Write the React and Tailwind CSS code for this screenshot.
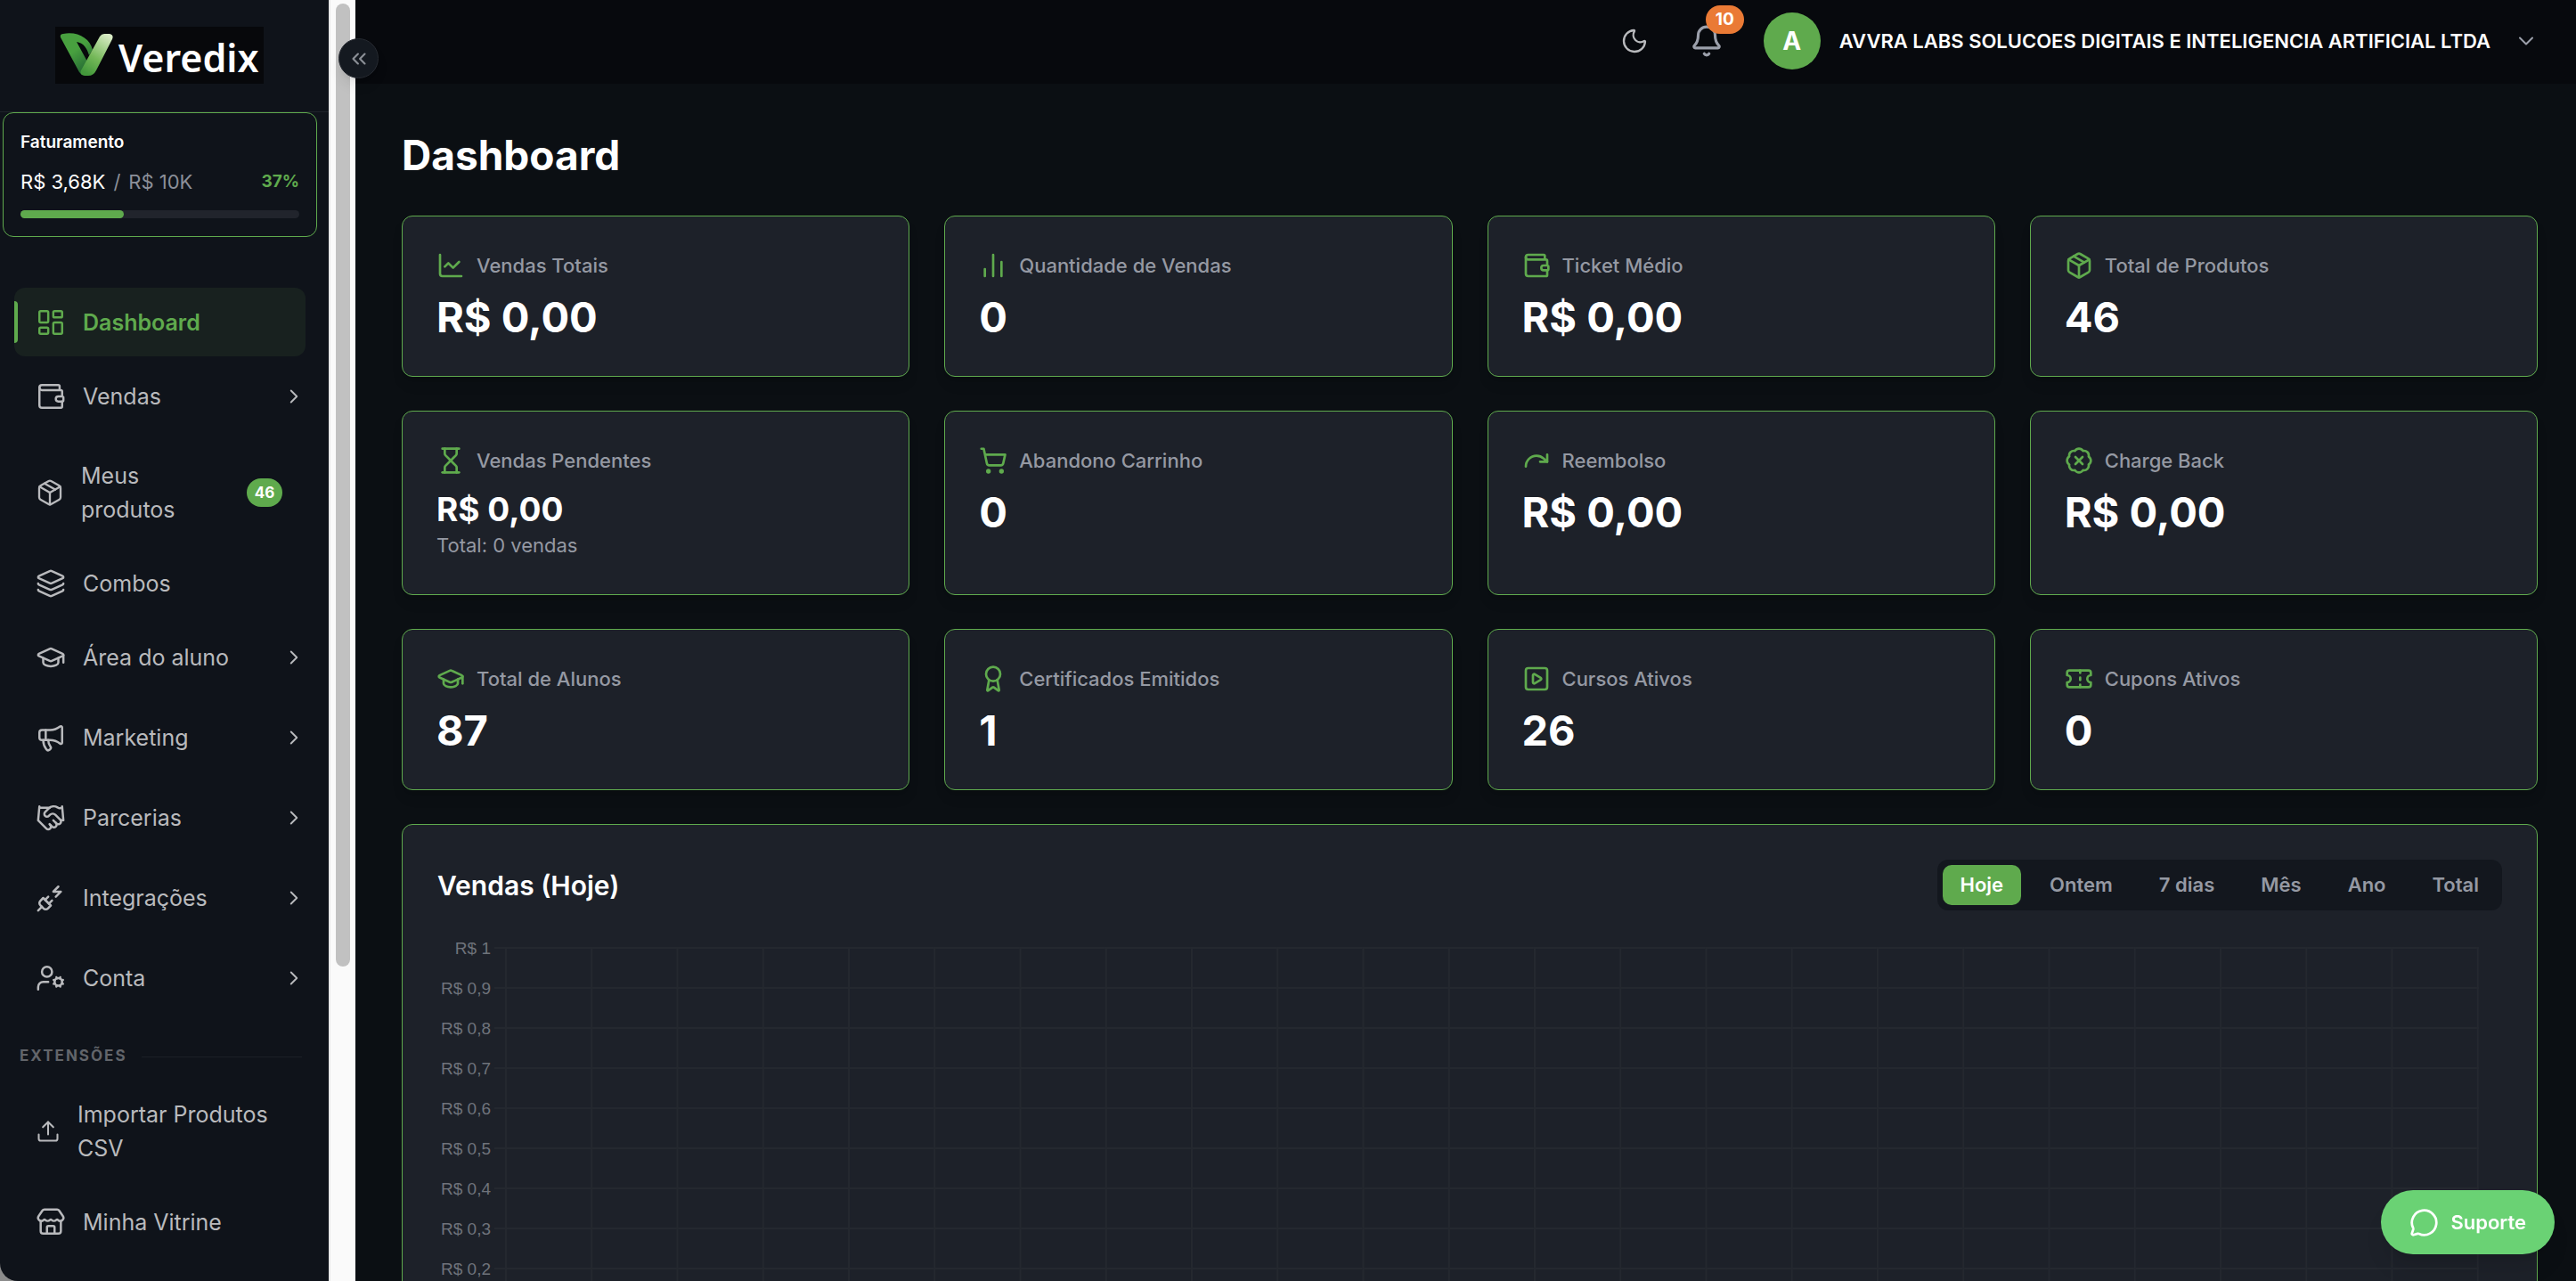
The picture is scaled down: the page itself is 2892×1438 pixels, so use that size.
import {
  Award, BadgeX, Bell, ChartLine, ChartNoAxesColumn, ChevronDown, ChevronRight, ChevronsLeft,
  GraduationCap, Handshake, Hourglass, Layers, LayoutDashboard, Megaphone, MessageCircle, Moon,
  Package, PlugZap, Redo, ShoppingCart, SquarePlay, Store, Ticket, Upload, UserCog, Wallet,
} from "lucide-react";

const cards = [
  { label: "Vendas Totais", value: "R$ 0,00", Icon: ChartLine },
  { label: "Quantidade de Vendas", value: "0", Icon: ChartNoAxesColumn },
  { label: "Ticket Médio", value: "R$ 0,00", Icon: Wallet },
  { label: "Total de Produtos", value: "46", Icon: Package },
  { label: "Vendas Pendentes", value: "R$ 0,00", note: "Total: 0 vendas", Icon: Hourglass },
  { label: "Abandono Carrinho", value: "0", Icon: ShoppingCart },
  { label: "Reembolso", value: "R$ 0,00", Icon: Redo },
  { label: "Charge Back", value: "R$ 0,00", Icon: BadgeX },
  { label: "Total de Alunos", value: "87", Icon: GraduationCap },
  { label: "Certificados Emitidos", value: "1", Icon: Award },
  { label: "Cursos Ativos", value: "26", Icon: SquarePlay },
  { label: "Cupons Ativos", value: "0", Icon: Ticket },
];

const menu = [
  { label: "Dashboard", Icon: LayoutDashboard, active: true },
  { label: "Vendas", Icon: Wallet, sub: true },
  { label: "Meus produtos", Icon: Package, badge: "46" },
  { label: "Combos", Icon: Layers },
  { label: "Área do aluno", Icon: GraduationCap, sub: true },
  { label: "Marketing", Icon: Megaphone, sub: true },
  { label: "Parcerias", Icon: Handshake, sub: true },
  { label: "Integrações", Icon: PlugZap, sub: true },
  { label: "Conta", Icon: UserCog, sub: true },
];

const extensions = [
  { label: "Importar Produtos CSV", Icon: Upload, small: true },
  { label: "Minha Vitrine", Icon: Store },
];

const periods = ["Hoje", "Ontem", "7 dias", "Mês", "Ano", "Total"];
const ticks = ["1", "0,9", "0,8", "0,7", "0,6", "0,5", "0,4", "0,3", "0,2"];

function Logo() {
  return (
    <a href="#" className="flex h-16 w-[234px] items-center gap-[6px] bg-[#07080b] pl-[5px] text-white">
      <svg width="60" height="50" viewBox="0 0 60 50" className="shrink-0" aria-hidden="true">
        <defs>
          <linearGradient id="leaf" x1="0" y1="0" x2="0.6" y2="1">
            <stop offset="0.5" stopColor="#48a03f" />
            <stop offset="1" stopColor="#256a34" />
          </linearGradient>
          <linearGradient id="stem" x1="0.8" y1="0" x2="0.3" y2="1">
            <stop offset="0" stopColor="#d9ebc6" />
            <stop offset="0.6" stopColor="#74b858" />
            <stop offset="1" stopColor="#43983b" />
          </linearGradient>
        </defs>
        <path d="M1 5Q0 1 4 1C20-2 34 6 37 19L33 25C31 18 27 11 19 10L31 32L25 47L22 44Z" fill="url(#leaf)" />
        <path d="M45 4Q47 1 50 1H56Q61 2 59 7L41 42Q38 48 32 48H28Q22 47 24 42Z" fill="url(#stem)" />
      </svg>
      <span className="pt-1 font-['Noto_Sans'] text-[43px] leading-none font-semibold">Veredix</span>
    </a>
  );
}

function NavItem({ label, Icon, active, sub, badge, small }) {
  const size = small ? 28 : badge ? 32 : 34;
  const tone = active
    ? "bg-[#18211f] font-semibold text-[#5faa4d]"
    : "text-[#b9babd]";
  return (
    <li className={sub ? "mb-[7px]" : ""}>
      <a href="#" className={`relative flex min-h-[77px] items-center gap-[19px] rounded-xl py-[19px] pl-6 text-[25px]/[38px] ${tone}`}>
        {active && <span className="absolute inset-y-[15px] left-0 w-1 rounded-r-sm bg-[#5faa4d]" />}
        <Icon size={size} strokeWidth={1.75} className="shrink-0" />
        <span className="min-w-0 flex-1">{label}</span>
        {badge && (
          <span className="mr-[26px] ml-10 flex h-8 w-10 items-center justify-center rounded-full bg-[#5faa4d] text-[17px] font-bold text-white">
            {badge}
          </span>
        )}
        {sub && <ChevronRight size={26} strokeWidth={1.75} className="shrink-0" />}
      </a>
    </li>
  );
}

function Sidebar() {
  return (
    <aside className="relative flex w-[399px] shrink-0">
      <div className="flex min-w-0 flex-1 flex-col overflow-hidden bg-[#8b8b8b]">
        <div className="flex flex-1 flex-col rounded-bl-[20px] bg-[#0f131a]">
          <div className="flex h-[126px] shrink-0 justify-center border-b border-[#1e2229] pt-[30px] pr-[11px]">
            <Logo />
          </div>
          <section className="mr-[13px] ml-[3px] flex h-[140px] shrink-0 flex-col rounded-xl border border-[#5faa4d] px-[19px] pt-[19px]">
            <h2 className="text-[19px]/7 font-semibold text-white">Faturamento</h2>
            <div className="mt-3 flex items-center justify-between">
              <p className="text-[22px]/9 text-[#8b8f99]">
                <span className="text-white">R$ 3,68K</span>
                <span className="px-[9px]">/</span>R$ 10K
              </p>
              <span className="text-[19px]/9 font-bold text-[#5faa4d]">37%</span>
            </div>
            <div className="mt-[14px] h-[9px] rounded-full bg-[#21242c]">
              <div className="h-full w-[37%] rounded-full bg-[#5faa4d]" />
            </div>
          </section>
          <nav className="mt-[57px] mr-[26px] ml-4">
            <ul className="flex flex-col gap-[6px]">
              {menu.map((item) => <NavItem key={item.label} {...item} />)}
            </ul>
            <div className="mt-[30px] mb-[14px] flex h-[26px] items-center gap-4 pr-1 pl-[6px]">
              <h3 className="text-[17px] font-bold tracking-[2px] text-[#62656a]">EXTENSÕES</h3>
              <span className="h-px flex-1 bg-[#1b1f26]" />
            </div>
            <ul className="flex flex-col gap-[6px]">
              {extensions.map((item) => <NavItem key={item.label} {...item} />)}
            </ul>
          </nav>
        </div>
      </div>
      <div className="w-[30px] border-l-2 border-[#e8e8e8] bg-[#fafafa] px-[6px] pt-1">
        <div className="h-[1081px] w-4 rounded-full bg-[#c1c1c1]" />
      </div>
      <button aria-label="Recolher menu" className="absolute top-[43px] -right-[26px] z-10 flex size-[45px] items-center justify-center rounded-full border border-[#262a31] bg-[#141920] text-[#8b8f96] shadow-lg">
        <ChevronsLeft size={26} strokeWidth={2} />
      </button>
    </aside>
  );
}

function Header() {
  return (
    <header className="flex h-[94px] shrink-0 items-center justify-end bg-[#07090d] pr-[42px] pb-[2px]">
      <button aria-label="Alternar tema" className="text-[#b9babd]">
        <Moon size={32} strokeWidth={1.75} />
      </button>
      <button aria-label="Notificações" className="relative ml-[46px] text-[#9ca0ab]">
        <Bell size={38} strokeWidth={2} />
        <span className="absolute -top-[21px] left-[18px] flex h-8 w-[43px] items-center justify-center rounded-full bg-[#ea7a35] text-[19px] font-bold text-white">
          10
        </span>
      </button>
      <button className="ml-[45px] flex items-center text-white">
        <span className="flex size-16 items-center justify-center rounded-full bg-[#5faa4d] text-[28px] font-bold">A</span>
        <span className="mr-[26px] ml-[21px] text-[22px] font-semibold">AVVRA LABS SOLUCOES DIGITAIS E INTELIGENCIA ARTIFICIAL LTDA</span>
        <ChevronDown size={28} strokeWidth={1.75} className="text-[#9ca0ab]" />
      </button>
    </header>
  );
}

function StatCard({ label, value, note, Icon }) {
  return (
    <article className="rounded-xl border border-[#5faa4d] bg-[#1d2129] px-[38px] pt-[39px] pb-[37px] shadow-lg">
      <h2 className="flex h-8 items-center gap-[13px] text-[22px] font-medium text-[#9599a3]">
        <Icon size={32} strokeWidth={2} className="shrink-0 text-[#5faa4d]" />
        {label}
      </h2>
      {note ? (
        <>
          <p className="mt-[15px] text-[37px]/[47px] font-bold text-white">{value}</p>
          <p className="text-[22px]/[35px] text-[#9599a3]">{note}</p>
        </>
      ) : (
        <p className="mt-[13px] text-[47px]/[58px] font-bold text-white">{value}</p>
      )}
    </article>
  );
}

function SalesChart() {
  return (
    <div className="mt-[20px] flex pr-[26px]">
      <ul className="w-[60px] text-right font-['Liberation_Sans'] text-[19px]/[45px] whitespace-nowrap text-[#6f737b]">
        {ticks.map((t) => <li key={t} className="h-[45px]">R$ {t}</li>)}
      </ul>
      <svg className="mt-[21px] ml-1 h-[452px] min-w-0 flex-1" aria-hidden="true">
        {ticks.map((t, i) => <rect key={t} x="0" y={i * 45} width="100%" height="2" fill="#24282f" />)}
        <svg x="12" width="100%" height="452" className="overflow-visible">
          {Array.from({ length: 24 }, (_, i) => (
            <rect key={i} x={`${(i * 99.36) / 23}%`} y="0" width="2" height="452" fill="#24282f" />
          ))}
        </svg>
      </svg>
    </div>
  );
}

export default function App() {
  return (
    <div className="flex h-screen overflow-hidden bg-[#0b0f13] font-['Inter',sans-serif]">
      <Sidebar />
      <div className="flex min-w-0 flex-1 flex-col">
        <Header />
        <main className="pt-[50px] pr-[43px] pl-[52px]">
          <h1 className="text-[46px]/[60px] font-bold text-white">Dashboard</h1>
          <div className="mt-[38px] grid grid-cols-4 gap-x-[39px] gap-y-[38px]">
            {cards.map((c) => <StatCard key={c.label} {...c} />)}
          </div>
          <section className="mt-[38px] rounded-xl border border-[#5faa4d] bg-[#1d2129] px-[39px] pt-[39px] pb-10">
            <div className="flex items-center justify-between">
              <h2 className="text-3xl font-semibold text-white">Vendas (Hoje)</h2>
              <div className="flex gap-3 rounded-xl bg-[#13171e] px-[6px] py-[6px]">
                {periods.map((p, i) => (
                  <button
                    key={p}
                    className={`h-[45px] rounded-[10px] px-5 text-[22px] font-semibold ${i === 0 ? "bg-[#5faa4d] text-white" : "text-[#9599a3]"}`}
                  >
                    {p}
                  </button>
                ))}
              </div>
            </div>
            <SalesChart />
          </section>
        </main>
      </div>
      <button className="fixed right-6 bottom-[30px] flex h-[72px] items-center gap-[13px] rounded-full bg-[#6ad274] px-8 text-[22px] font-semibold text-white shadow-xl">
        <MessageCircle size={33} strokeWidth={2} />
        Suporte
      </button>
    </div>
  );
}
